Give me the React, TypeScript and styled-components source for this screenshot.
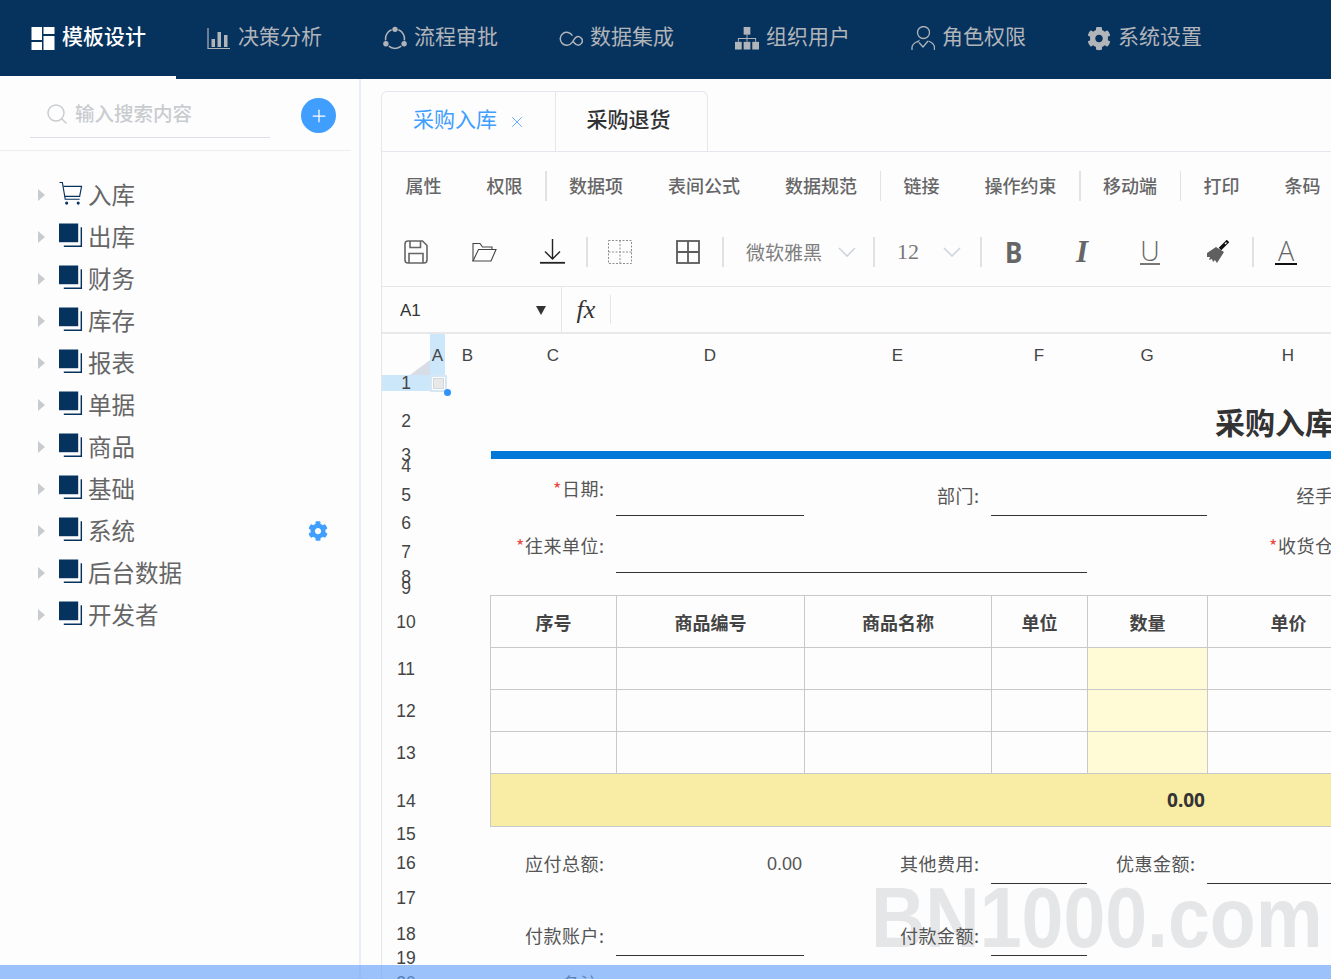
import React from "react";
import styled, { createGlobalStyle, css } from "styled-components";
import { FaCog } from "react-icons/fa";
import { Search, Plus, X } from "lucide-react";

const NAVY = "#06325e";
const CJK = `"Noto Sans CJK SC", "Noto Sans", sans-serif`;
const GRID_LINE = "#c9c9c9";

const GlobalStyle = createGlobalStyle`
  html, body {
    margin: 0;
    padding: 0;
    overflow: hidden;
    background: #fdfdfe;
    font-family: ${CJK};
  }
  * {
    box-sizing: border-box;
  }
`;

const Root = styled.div`
  position: relative;
  height: 100vh;
  overflow: hidden;
  display: flex;
  flex-direction: column;
  background: #fdfdfe;
`;

/* top navigation */
const TopNav = styled.nav`
  display: flex;
  height: 79px;
  flex: none;
  background: ${NAVY};
`;

const NavItem = styled.div<{ $active?: boolean }>`
  width: 176px;
  flex: none;
  display: flex;
  align-items: center;
  gap: 7px;
  padding-left: 31px;
  font-size: 21px;
  white-space: nowrap;
  color: ${(p) => (p.$active ? "#ffffff" : "#b1b4b8")};
  font-weight: ${(p) => (p.$active ? 500 : 400)};
  border-bottom: 3px solid ${(p) => (p.$active ? "#ffffff" : "transparent")};
`;

const NavLabel = styled.span`
  padding-bottom: 6px;
`;

const NavIconBox = styled.span`
  width: 24px;
  height: 24px;
  flex: none;
  display: flex;
  align-items: center;
  justify-content: center;
`;

/* page body */
const Body = styled.div`
  flex: 1;
  min-height: 0;
  display: flex;
  position: relative;
  z-index: 1;
`;

const Sidebar = styled.aside`
  width: 361px;
  flex: none;
  border-right: 2px solid #e8edf6;
`;

const SearchBar = styled.div`
  display: flex;
  justify-content: space-between;
  align-items: flex-start;
  width: 351px;
  height: 72px;
  padding: 12px 15px 0 30px;
  border-bottom: 1px solid #eceef2;
`;

const SearchBox = styled.div`
  width: 240px;
  height: 47px;
  display: flex;
  align-items: center;
  gap: 6px;
  padding-left: 15px;
  border-bottom: 1px solid #dcdfe6;
  color: #c9cccf;
  font-size: 19.5px;
  font-weight: 500;
`;

const SearchHint = styled.span`
  padding-bottom: 4px;
`;

const AddButton = styled.button`
  width: 35px;
  height: 35px;
  margin-top: 7px;
  padding: 0;
  border: 0;
  border-radius: 50%;
  background: #409eff;
  color: #fff;
  display: flex;
  align-items: center;
  justify-content: center;
`;

const Tree = styled.ul`
  list-style: none;
  margin: 0;
  padding: 23px 31px 0 38px;
`;

const TreeRow = styled.li`
  height: 42px;
  display: flex;
  align-items: center;
  font-size: 23.5px;
  color: #666;
`;

const TreeLabel = styled.span`
  padding-bottom: 2px;
`;

const Caret = styled.span`
  width: 0;
  height: 0;
  margin-right: 14px;
  border-left: 7px solid #c8cbd0;
  border-top: 6px solid transparent;
  border-bottom: 6px solid transparent;
`;

const TreeIconBox = styled.span`
  width: 24px;
  height: 24px;
  margin: 0 5px 4px 0;
  flex: none;
  display: flex;
`;

const TreeGear = styled.span`
  margin-left: auto;
  display: flex;
  color: #409eff;
`;

/* main panel */
const Main = styled.main`
  flex: 1;
  min-width: 0;
  margin-left: 20px;
  display: flex;
  flex-direction: column;
`;

const TabBar = styled.div`
  height: 73px;
  flex: none;
  padding-top: 12px;
  border-bottom: 1px solid #e4e7ed;
`;

const TabGroup = styled.div`
  width: 327px;
  height: 60px;
  display: flex;
  border: 1px solid #e4e7ed;
  border-bottom: 0;
  border-radius: 6px 6px 0 0;
`;

const Tab = styled.div<{ $active?: boolean }>`
  display: flex;
  align-items: center;
  gap: 11px;
  font-size: 21px;
  white-space: nowrap;
  padding-left: ${(p) => (p.$active ? "31px" : "30px")};
  width: ${(p) => (p.$active ? "175px" : "151px")};
  color: ${(p) => (p.$active ? "#409eff" : "#303133")};
  border-right: ${(p) => (p.$active ? "1px solid #e4e7ed" : "0")};
  font-weight: ${(p) => (p.$active ? 400 : 500)};
`;

const TabLabel = styled.span`
  padding-bottom: 7px;
`;

const Workspace = styled.div`
  flex: 1;
  min-height: 0;
  border-left: 1px solid #e6e6e6;
  display: flex;
  flex-direction: column;
`;

const MenuRow = styled.div`
  height: 68px;
  flex: none;
  display: flex;
  align-items: center;
  padding-left: 1px;
  white-space: nowrap;
`;

const MenuItem = styled.span`
  padding: 0 22.5px 2px;
  font-size: 18px;
  font-weight: 500;
  color: #666;
`;

const MenuDivider = styled.span`
  width: 1.5px;
  height: 30px;
  flex: none;
  background: #e2e2e2;
`;

const ToolRow = styled.div`
  height: 67px;
  flex: none;
  display: flex;
  align-items: center;
  padding-bottom: 3px;
  white-space: nowrap;
  border-bottom: 1px solid #e6e6e6;
`;

const ToolButton = styled.span`
  width: 68px;
  height: 30px;
  flex: none;
  display: flex;
  align-items: center;
  justify-content: center;
  color: #666;
`;

const ToolDivider = styled.span`
  width: 1.5px;
  height: 30px;
  margin-right: -1.5px;
  flex: none;
  background: #e2e2e2;
`;

const FontSelect = styled.span<{ $width: number; $pad: number }>`
  width: ${(p) => p.$width}px;
  height: 30px;
  flex: none;
  display: flex;
  align-items: center;
  justify-content: space-between;
  padding: 0 ${(p) => p.$pad}px 0 24px;
`;

const FontName = styled.span`
  font-size: 19px;
  color: #808080;
`;

const FontSize = styled.span`
  font-family: "Liberation Serif", serif;
  font-size: 22px;
  color: #777;
`;

const BoldGlyph = styled.span`
  font-family: "Noto Sans", sans-serif;
  font-size: 29px;
  font-weight: 700;
  line-height: 1;
  transform: scaleX(0.9);
`;

const ItalicGlyph = styled.span`
  font-family: "Liberation Serif", serif;
  font-size: 31px;
  font-weight: 700;
  font-style: italic;
  line-height: 1;
`;

const UnderGlyph = styled.span<{ $dark?: boolean }>`
  font-family: "Open Sans", sans-serif;
  font-size: 27px;
  font-weight: 300;
  line-height: 25px;
  padding: 0 ${(p) => (p.$dark ? 3 : 0)}px;
  border-bottom: ${(p) => (p.$dark ? "2px solid #111" : "2px solid #777")};
`;

const FormulaRow = styled.div`
  height: 47px;
  flex: none;
  display: flex;
  align-items: stretch;
  border-bottom: 2px solid #e8e8e8;
`;

const NameBox = styled.div`
  width: 180px;
  flex: none;
  display: flex;
  align-items: center;
  justify-content: space-between;
  padding: 2px 15px 0 18px;
  border-right: 1px solid #e6e6e6;
  font-family: "Liberation Sans", sans-serif;
  font-size: 17px;
  color: #333;
`;

const NameArrow = styled.span`
  width: 0;
  height: 0;
  border-top: 9px solid #333;
  border-left: 5.5px solid transparent;
  border-right: 5.5px solid transparent;
`;

const FxBox = styled.div`
  width: 49px;
  margin: 8px 0;
  display: flex;
  align-items: center;
  justify-content: center;
  border-right: 1px solid #e6e6e6;
  font-family: "Liberation Serif", serif;
  font-style: italic;
  font-size: 26px;
  color: #333;
`;

/* sheet */
const SheetViewport = styled.div`
  flex: 1;
  min-height: 0;
  overflow: hidden;
`;

const Sheet = styled.div`
  display: grid;
  width: 1187px;
  grid-template-columns: 48px 15px 45px 126px 188px 187px 96px 120px 162px 200px;
  grid-template-rows: 41px 16px 60px 8px 14px 43px 14px 43px 8px 14px 53px 42px 42px 42px 53px 14px 43px 28px 44px 4px 46px;
  font-size: 18px;
  color: #555;
`;

type Place = { $col: number; $row: number; $span?: number };

const place = css<Place>`
  grid-column: ${(p) => p.$col} / span ${(p) => p.$span ?? 1};
  grid-row: ${(p) => p.$row + 1};
`;

const ColHead = styled.div<Place & { $active?: boolean }>`
  ${place}
  display: flex;
  align-items: center;
  justify-content: center;
  padding-top: 2px;
  font-family: "Liberation Sans", sans-serif;
  font-size: 17px;
  color: #444;
  background: ${(p) => (p.$active ? "#cce6fa" : "transparent")};
`;

const RowHead = styled.div<Place & { $active?: boolean }>`
  ${place}
  display: flex;
  align-items: center;
  justify-content: center;
  padding-top: 2px;
  font-family: "Liberation Sans", sans-serif;
  font-size: 17.5px;
  line-height: 1;
  color: #444;
  background: ${(p) => (p.$active ? "#cce6fa" : "transparent")};
`;

const Corner = styled.div<Place>`
  ${place}
  position: relative;
  &::after {
    content: "";
    position: absolute;
    right: 0;
    bottom: 0;
    width: 20px;
    height: 15px;
    background: #d8dce7;
    clip-path: polygon(100% 0, 100% 100%, 0 100%);
  }
`;

const SelectedCell = styled.div<Place>`
  ${place}
  position: relative;
  z-index: 2;
  width: 17px;
  height: 17px;
  border: 2px solid #d6e6f3;
  background: #fdfdfe;
  &::before {
    content: "";
    position: absolute;
    inset: 1px;
    background: #e8e8e8;
    border: 1px solid #cfd8de;
  }
  &::after {
    content: "";
    position: absolute;
    right: -6px;
    bottom: -6px;
    width: 7px;
    height: 7px;
    border-radius: 50%;
    background: #2f93fb;
  }
`;

const Title = styled.div<Place>`
  ${place}
  display: flex;
  align-items: center;
  padding-left: 8px;
  font-size: 30px;
  font-weight: 700;
  color: #333;
  white-space: nowrap;
`;

const Band = styled.div<Place>`
  ${place}
  margin-left: 1px;
  background: #0078d7;
`;

const Field = styled.div<Place & { $shift?: number }>`
  ${place}
  display: flex;
  align-items: center;
  justify-content: flex-end;
  padding-right: 11.5px;
  letter-spacing: 0.5px;
  white-space: nowrap;
  transform: translateY(${(p) => p.$shift ?? 0}px);
`;

const Required = styled.span`
  color: #e8483f;
`;

const ValueText = styled.div<Place>`
  ${place}
  display: flex;
  align-items: center;
  justify-content: flex-end;
  padding-right: 2px;
  transform: translateY(2px);
  font-family: "Liberation Sans", sans-serif;
`;

const Underline = styled.div<Place>`
  ${place}
  border-bottom: 1px solid #333;
`;

const TableCell = styled.div<Place & { $tint?: boolean; $head?: boolean }>`
  ${place}
  display: flex;
  align-items: center;
  justify-content: center;
  border-left: 1px solid ${GRID_LINE};
  border-bottom: 1px solid ${GRID_LINE};
  border-top: ${(p) => (p.$head ? `1px solid ${GRID_LINE}` : "0")};
  background: ${(p) => (p.$tint ? "#fffbd6" : "transparent")};
  font-weight: 700;
  color: #444;
`;

const TotalCell = styled.div<Place & { $first?: boolean }>`
  ${place}
  display: flex;
  align-items: center;
  justify-content: flex-end;
  padding-right: 2px;
  background: #f9eca5;
  border-bottom: 1px solid ${GRID_LINE};
  border-left: ${(p) => (p.$first ? `1px solid ${GRID_LINE}` : "0")};
  font-family: "Noto Sans", sans-serif;
  font-size: 19px;
  font-weight: 700;
  color: #333;
`;

/* things laid over the page */
const Watermark = styled.div`
  position: absolute;
  left: 871px;
  top: 870px;
  font-family: "Liberation Sans", sans-serif;
  font-size: 86px;
  font-weight: 700;
  line-height: 94px;
  color: #e5e6e8;
  white-space: nowrap;
  transform: scaleX(0.875);
  transform-origin: left center;
`;

const BottomBar = styled.div`
  position: absolute;
  z-index: 3;
  left: 0;
  right: 0;
  bottom: 0;
  height: 14px;
  background: rgba(100, 160, 248, 0.63);
`;

/* icons */
const Stroke = styled.svg`
  fill: none;
  stroke: currentColor;
`;

const TemplateIcon = () => (
  <svg width="24" height="24" viewBox="0 0 24 24" fill="#fff">
    <rect x="0.5" y="1" width="10.5" height="13" />
    <rect x="0.5" y="16" width="10.5" height="8" />
    <rect x="12.5" y="1" width="11" height="7" />
    <rect x="12.5" y="10" width="11" height="14" />
  </svg>
);

const ChartIcon = () => (
  <Stroke width="24" height="24" viewBox="0 0 24 24" strokeWidth="1.2">
    <path d="M1 2v20.5h22" />
    <path d="M4.500 21v-8h3.500v8zM10.500 21V6h3.500v15zM17 21v-12h3.500v12z" fill="currentColor" stroke="none" />
  </Stroke>
);

const FlowIcon = () => (
  <Stroke width="25" height="24" viewBox="0 0 25 24" strokeWidth="1.6">
    <path d="M9 3.500a9.800 9.800 0 0 0-6.300 11M16 3.500a9.800 9.800 0 0 1 6.300 11M6 20.500a10 10 0 0 0 13 0" />
    <circle cx="12.500" cy="3" r="2.800" fill="currentColor" stroke="none" />
    <circle cx="3" cy="18" r="2.800" fill="currentColor" stroke="none" />
    <circle cx="22" cy="18" r="2.800" fill="currentColor" stroke="none" />
  </Stroke>
);

const LinkIcon = () => (
  <Stroke width="26" height="24" viewBox="0 0 26 24" strokeWidth="1.6">
    <path d="M14.500 9.500A7 7 0 1 0 14 17c1.500-2 2.500-4 4-5.500a4.500 4.500 0 1 1 .5 7.500c-1.500-1-2.500-2.500-3.500-3.500" />
  </Stroke>
);

const OrgIcon = () => (
  <svg width="25" height="24" viewBox="0 0 25 24" fill="currentColor">
    <rect x="9" y="0.5" width="7" height="8" />
    <rect x="0" y="16" width="7" height="8" />
    <rect x="9" y="16" width="7" height="8" />
    <rect x="18" y="16" width="7" height="8" />
    <path d="M12 8h1v4h9v4h-1v-3h-8v3h-1v-3H4v3H3v-4h9z" />
  </svg>
);

const RoleIcon = () => (
  <Stroke width="24" height="24" viewBox="0 0 24 24" strokeWidth="1.3">
    <circle cx="12.500" cy="6.500" r="6" />
    <path d="M1 24v-2.500c0-3 3-5 6.500-6.500l-1 1.500" />
    <path d="M23.500 24v-2.500c0-3-2.500-5-6-6.500" />
    <path d="M8 16.500l4 4.500 5-6" />
  </Stroke>
);

const StackIcon = () => (
  <svg width="25" height="25" viewBox="0 0 25 25" fill={NAVY}>
    <rect x="0" y="0" width="20" height="19.500" />
    <path d="M22.500 4H24v20.500H5V23h17.500z" />
  </svg>
);

const CartIcon = () => (
  <svg width="25" height="25" viewBox="0 0 25 25" fill="none" stroke={NAVY} strokeWidth="1.2">
    <path d="M.5 1h3l3 17.500h15" />
    <path d="M4.500 5H23.500l-2 10.500H6" />
    <circle cx="8" cy="22.500" r="1" fill={NAVY} />
    <circle cx="20" cy="22.500" r="1" fill={NAVY} />
  </svg>
);

const SaveIcon = () => (
  <Stroke width="24" height="24" viewBox="0 0 24 24" strokeWidth="1.6">
    <path d="M4 1h14.500L23 5.500V20a3 3 0 0 1-3 3H4a3 3 0 0 1-3-3V4a3 3 0 0 1 3-3z" />
    <path d="M6 1v6.500h10.500V1M5 23v-9.500h14V23" />
  </Stroke>
);

const FolderIcon = () => (
  <svg width="25" height="20" viewBox="0 0 25 20" fill="none" stroke="#444" strokeWidth="1.1">
    <path d="M1 19V1.500h7L10.500 5H20v2.500" />
    <path d="M1 19h18l5-11.500H6.500z" />
  </svg>
);

const DownloadIcon = () => (
  <svg width="25" height="25" viewBox="0 0 25 25" fill="none" stroke="#222" strokeWidth="1.4">
    <path d="M12.500 0v20M5 12.500l7.500 7.500 7.500-7.500" />
    <path d="M0 23.800h25" strokeWidth="1.8" />
  </svg>
);

const BorderNoneIcon = () => (
  <svg width="24" height="24" viewBox="0 0 24 24" fill="none" stroke="#8f8f8f" strokeWidth="1" strokeDasharray="2 1.500">
    <rect x="0.500" y="0.500" width="23" height="23" />
    <path d="M12 .5v23M.5 12h23" />
  </svg>
);

const BorderAllIcon = () => (
  <svg width="24" height="24" viewBox="0 0 24 24" fill="none" stroke="#5a5a5a" strokeWidth="1.8">
    <rect x="1" y="1" width="22" height="22" />
    <path d="M12 1v22M1 12h22" />
  </svg>
);

const BrushIcon = () => (
  <svg width="24" height="24" viewBox="0 0 24 24">
    <path d="M10 7l8 5-7 11-2-3-2 2-1-3-3 1 1-3-3 0v-4z" fill="#5f5f5f" />
    <path d="M14 9l8-8" stroke="#111" strokeWidth="3.500" fill="none" />
    <path d="M19 4l1.500-1.500" stroke="#fff" strokeWidth="1.200" fill="none" />
  </svg>
);

const Chevron = () => (
  <svg width="18" height="10" viewBox="0 0 18 10" fill="none" stroke="#cfd4db" strokeWidth="1.6">
    <path d="M1 1l8 8 8-8" />
  </svg>
);

/* data */
const navItems: { label: string; icon: React.ReactNode; active?: boolean }[] = [
  { label: "模板设计", icon: <TemplateIcon />, active: true },
  { label: "决策分析", icon: <ChartIcon /> },
  { label: "流程审批", icon: <FlowIcon /> },
  { label: "数据集成", icon: <LinkIcon /> },
  { label: "组织用户", icon: <OrgIcon /> },
  { label: "角色权限", icon: <RoleIcon /> },
  { label: "系统设置", icon: <FaCog size={25} /> },
];

const treeItems = ["入库", "出库", "财务", "库存", "报表", "单据", "商品", "基础", "系统", "后台数据", "开发者"];

const menuGroups = [
  ["属性", "权限"],
  ["数据项", "表间公式", "数据规范"],
  ["链接", "操作约束"],
  ["移动端"],
  ["打印", "条码"],
];

const columns = ["A", "B", "C", "D", "E", "F", "G", "H"];
const tableHeads = ["序号", "商品编号", "商品名称", "单位", "数量", "单价"];
const tableCols = [4, 5, 6, 7, 8, 9];
const rowNumbers = Array.from({ length: 20 }, (_, i) => i + 1);

export default function App() {
  return (
    <Root>
      <GlobalStyle />
      <Watermark>BN1000.com</Watermark>
      <TopNav>
        {navItems.map((item) => (
          <NavItem key={item.label} $active={item.active}>
            <NavIconBox>{item.icon}</NavIconBox>
            <NavLabel>{item.label}</NavLabel>
          </NavItem>
        ))}
      </TopNav>
      <Body>
        <Sidebar>
          <SearchBar>
            <SearchBox>
              <Search size={24} strokeWidth={1.5} />
              <SearchHint>输入搜索内容</SearchHint>
            </SearchBox>
            <AddButton>
              <Plus size={20} strokeWidth={1.5} />
            </AddButton>
          </SearchBar>
          <Tree>
            {treeItems.map((name, i) => (
              <TreeRow key={name}>
                <Caret />
                <TreeIconBox>{i === 0 ? <CartIcon /> : <StackIcon />}</TreeIconBox>
                <TreeLabel>{name}</TreeLabel>
                {name === "系统" && (
                  <TreeGear>
                    <FaCog size={20} />
                  </TreeGear>
                )}
              </TreeRow>
            ))}
          </Tree>
        </Sidebar>
        <Main>
          <TabBar>
            <TabGroup>
              <Tab $active>
                <TabLabel>采购入库</TabLabel>
                <X size={18} strokeWidth={1.1} />
              </Tab>
              <Tab>
                <TabLabel>采购退货</TabLabel>
              </Tab>
            </TabGroup>
          </TabBar>
          <Workspace>
            <MenuRow>
              {menuGroups.map((group, i) => (
                <React.Fragment key={group[0]}>
                  {i > 0 && <MenuDivider />}
                  {group.map((label) => (
                    <MenuItem key={label}>{label}</MenuItem>
                  ))}
                </React.Fragment>
              ))}
            </MenuRow>
            <ToolRow>
              <ToolButton><SaveIcon /></ToolButton>
              <ToolButton><FolderIcon /></ToolButton>
              <ToolButton><DownloadIcon /></ToolButton>
              <ToolDivider />
              <ToolButton><BorderNoneIcon /></ToolButton>
              <ToolButton><BorderAllIcon /></ToolButton>
              <ToolDivider />
              <FontSelect $width={151} $pad={17}>
                <FontName>微软雅黑</FontName>
                <Chevron />
              </FontSelect>
              <ToolDivider />
              <FontSelect $width={107} $pad={19}>
                <FontSize>12</FontSize>
                <Chevron />
              </FontSelect>
              <ToolDivider />
              <ToolButton><BoldGlyph>B</BoldGlyph></ToolButton>
              <ToolButton><ItalicGlyph>I</ItalicGlyph></ToolButton>
              <ToolButton><UnderGlyph>U</UnderGlyph></ToolButton>
              <ToolButton><BrushIcon /></ToolButton>
              <ToolDivider />
              <ToolButton><UnderGlyph $dark>A</UnderGlyph></ToolButton>
            </ToolRow>
            <FormulaRow>
              <NameBox>
                A1
                <NameArrow />
              </NameBox>
              <FxBox>fx</FxBox>
            </FormulaRow>
            <SheetViewport>
              <Sheet>
                <Corner $col={1} $row={0} />
                {columns.map((c, i) => (
                  <ColHead key={c} $col={i + 2} $row={0} $active={c === "A"}>
                    {c}
                  </ColHead>
                ))}
                {rowNumbers.map((n) => (
                  <RowHead key={n} $col={1} $row={n} $active={n === 1}>
                    {n}
                  </RowHead>
                ))}
                <SelectedCell $col={2} $row={1} />

                <Title $col={9} $row={2} $span={2}>采购入库</Title>
                <Band $col={4} $row={3} $span={7} />

                <Field $col={4} $row={5} $shift={-7}><Required>*</Required>日期:</Field>
                <Underline $col={5} $row={5} />
                <Field $col={6} $row={5}>部门:</Field>
                <Underline $col={7} $row={5} $span={2} />
                <Field $col={9} $row={5}>经手人:</Field>

                <Field $col={4} $row={7} $shift={-7}><Required>*</Required>往来单位:</Field>
                <Underline $col={5} $row={7} $span={3} />
                <Field $col={9} $row={7} $shift={-7}><Required>*</Required>收货仓库:</Field>

                {tableHeads.map((h, i) => (
                  <TableCell key={h} $col={tableCols[i]} $row={10} $head>{h}</TableCell>
                ))}
                <TableCell $col={10} $row={10} $head />
                {[11, 12, 13].map((r) =>
                  tableCols.map((c) => (
                    <TableCell key={`${r}-${c}`} $col={c} $row={r} $tint={c === 8} />
                  ))
                )}
                {[11, 12, 13].map((r) => (
                  <TableCell key={r} $col={10} $row={r} />
                ))}
                <TotalCell $col={4} $row={14} $span={5} $first>0.00</TotalCell>
                <TotalCell $col={9} $row={14} $span={2} />

                <Field $col={4} $row={16}>应付总额:</Field>
                <ValueText $col={5} $row={16}>0.00</ValueText>
                <Field $col={6} $row={16}>其他费用:</Field>
                <Underline $col={7} $row={16} />
                <Field $col={8} $row={16}>优惠金额:</Field>
                <Underline $col={9} $row={16} $span={2} />

                <Field $col={4} $row={18} $shift={1}>付款账户:</Field>
                <Underline $col={5} $row={18} />
                <Field $col={6} $row={18} $shift={1}>付款金额:</Field>
                <Underline $col={7} $row={18} />

                <Field $col={4} $row={20}>备注:</Field>
              </Sheet>
            </SheetViewport>
          </Workspace>
        </Main>
      </Body>
      <BottomBar />
    </Root>
  );
}
